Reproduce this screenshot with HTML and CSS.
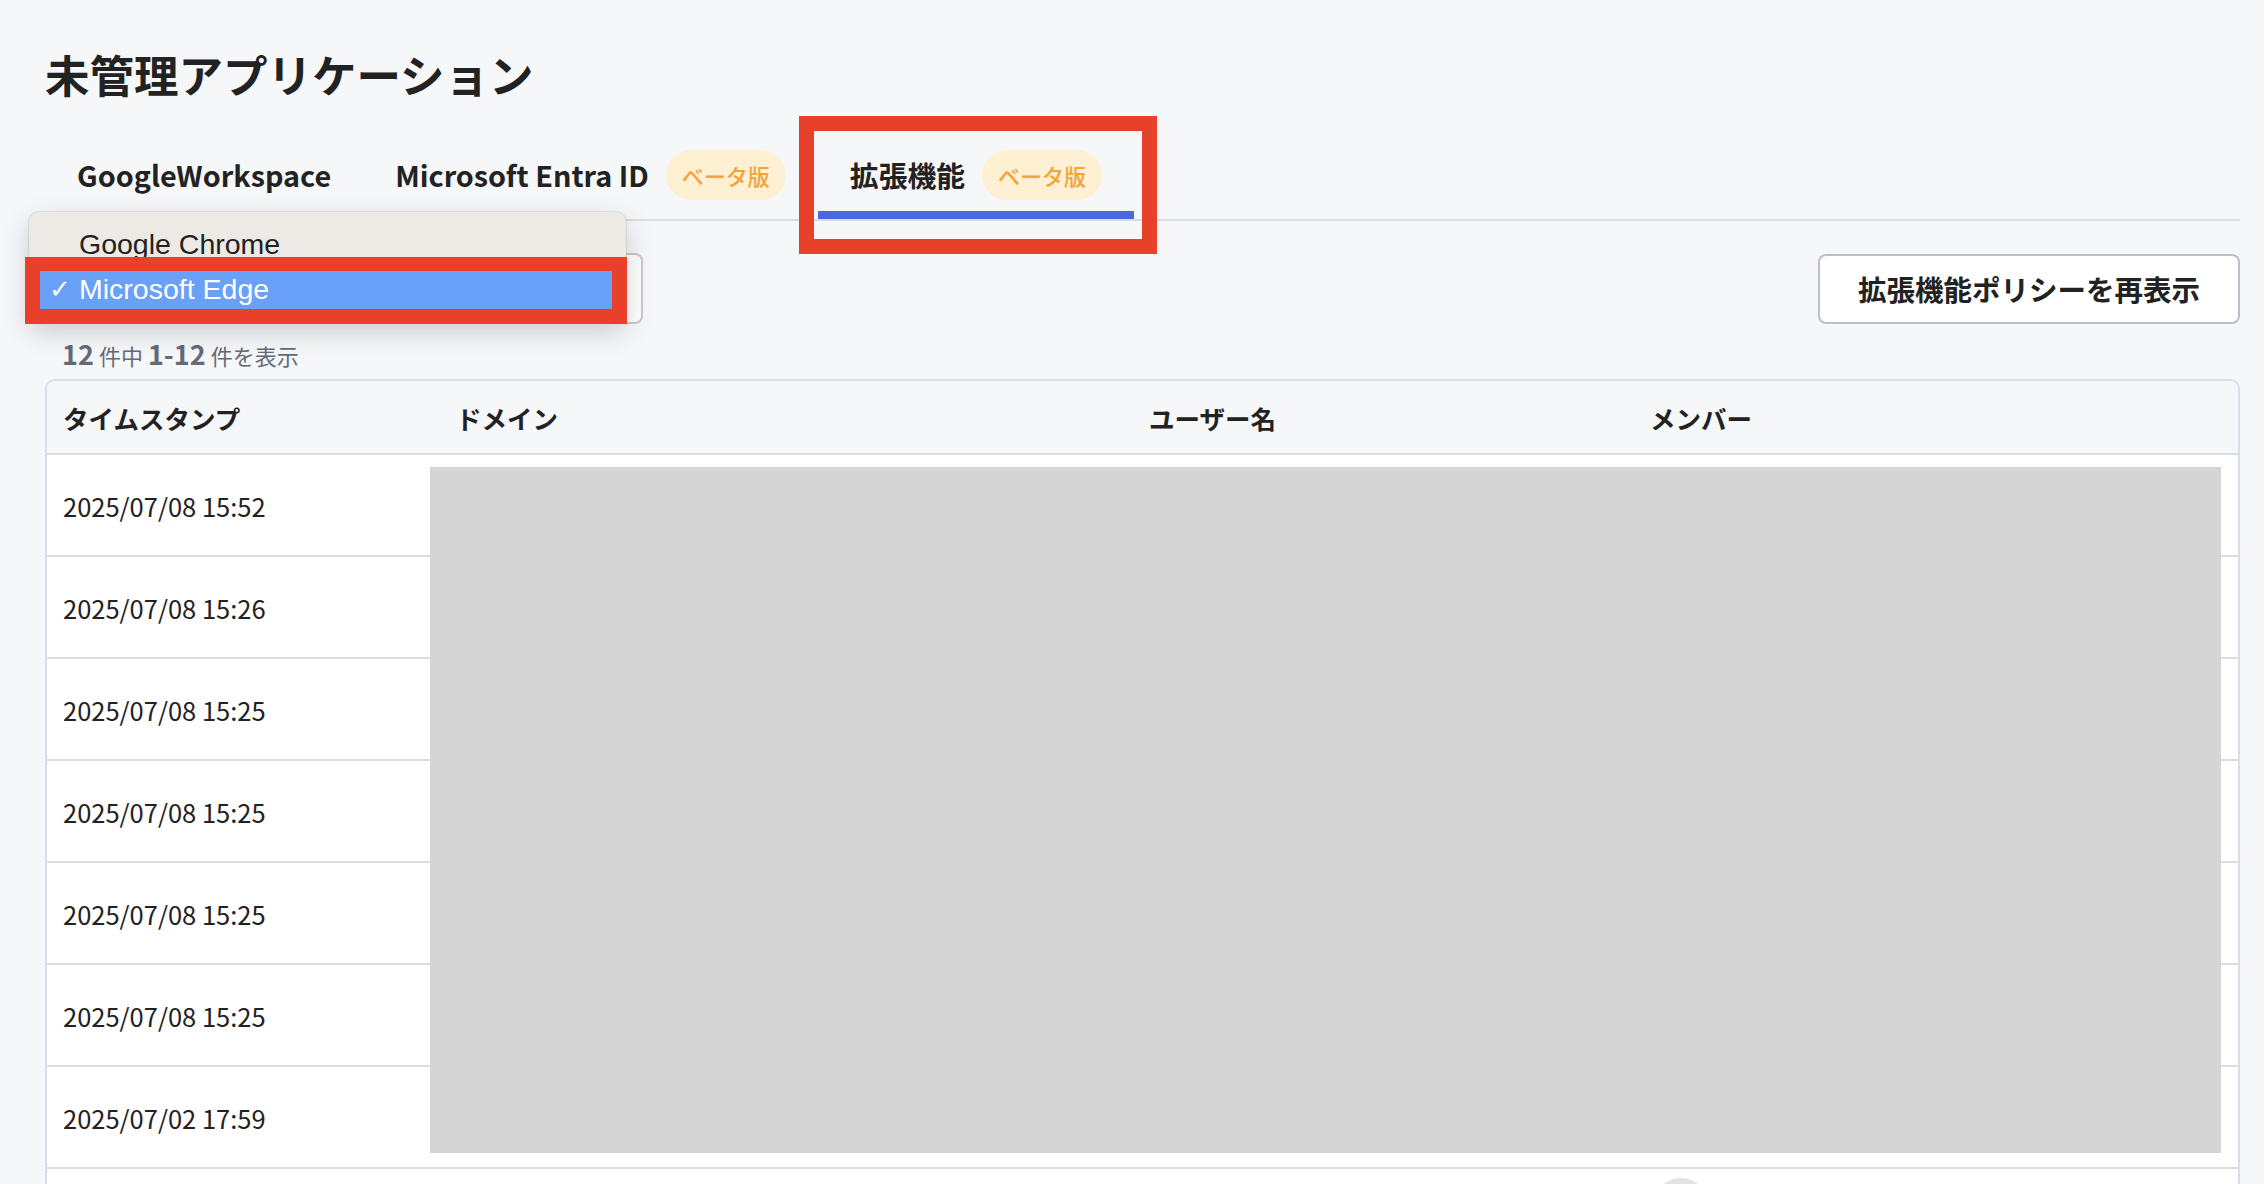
FILE: index.html
```html
<!DOCTYPE html>
<html lang="ja">
<head>
  <meta charset="UTF-8" />
  <title>未管理アプリケーション</title>
  <link rel="stylesheet" href="styles.css">
</head>
<body>

  <div class="page">
    <h1 class="title">未管理アプリケーション</h1>

    <nav class="tabs">
      <div class="tab">GoogleWorkspace</div>
      <div class="tab">Microsoft Entra ID <span class="badge">ベータ版</span></div>
      <div class="tab active">拡張機能 <span class="badge">ベータ版</span>
        <span class="annot annot-tab"></span>
      </div>
    </nav>

    <div class="toolbar">
      <div class="select-wrap">
        <div class="select"></div>
        <ul class="menu">
          <li>Google Chrome</li>
          <li class="selected">Microsoft Edge
            <span class="annot annot-option"></span>
          </li>
        </ul>
      </div>
      <button class="btn">拡張機能ポリシーを再表示</button>
    </div>

    <p class="count"><b>12</b><span>件中</span><b>1-12</b><span>件を表示</span></p>

    <div class="table-wrap">
      <table>
        <colgroup>
          <col class="c-time">
          <col class="c-domain">
          <col class="c-user">
          <col>
        </colgroup>
        <thead>
          <tr>
            <th>タイムスタンプ</th>
            <th>ドメイン</th>
            <th>ユーザー名</th>
            <th>メンバー</th>
          </tr>
        </thead>
        <tbody>
          <tr><td>2025/07/08 15:52</td><td></td><td></td><td></td></tr>
          <tr><td>2025/07/08 15:26</td><td></td><td></td><td></td></tr>
          <tr><td>2025/07/08 15:25</td><td></td><td></td><td></td></tr>
          <tr><td>2025/07/08 15:25</td><td></td><td></td><td></td></tr>
          <tr><td>2025/07/08 15:25</td><td></td><td></td><td></td></tr>
          <tr><td>2025/07/08 15:25</td><td></td><td></td><td></td></tr>
          <tr><td>2025/07/02 17:59</td><td></td><td></td><td></td></tr>
          <tr class="row-more"><td></td><td></td><td></td><td class="members"><span class="avatar"></span></td></tr>
        </tbody>
      </table>
      <div class="redact"></div>
    </div>
  </div>

</body>
</html>
```

FILE: styles.css
```css
body { margin: 0; background: #f6f7f9; color: #222; font-family: "Noto Sans CJK JP", sans-serif; }
.page { padding: 42px 24px 0 45px; }

.title { margin: 0 0 24px; font-size: 44.5px; line-height: 64px; font-weight: 700; }

/* tabs */
.tabs { display: flex; border-bottom: 2px solid #d7dce4; }
.tab { position: relative; display: flex; align-items: center; gap: 17px; padding: 20px 32px 11px; border-bottom: 8px solid transparent; font-size: 28.8px; font-weight: 700; line-height: 50px; }
.tab.active { border-bottom-color: #4a69dc; }
.badge { display: inline-block; height: 50px; padding: 0 16px; border-radius: 25px; background: #fdf0d3; color: #f2a33a; font-size: 22px; font-weight: 500; line-height: 50px; }

/* red annotation frames */
.annot { position: absolute; border: 15px solid #e8402a; pointer-events: none; }
.annot-tab { left: -19px; right: -23px; top: -14px; bottom: -43px; }
.annot-option { left: -4px; right: -1px; top: -10px; bottom: -12px; border-top-width: 14px; }

/* toolbar */
.toolbar { display: flex; justify-content: space-between; align-items: center; margin-top: 32px; }
.select-wrap { position: relative; }
.select { width: 598px; height: 71px; box-sizing: border-box; border: 2px solid #c5cad3; border-radius: 8px; background: #fff; }
.menu { position: absolute; left: -16px; top: -41px; width: 597px; margin: 0; padding: 10px 0; list-style: none; background: #edeae5; border-radius: 10px; box-shadow: 0 10px 28px rgba(0, 0, 0, 0.18), 0 0 0 1px rgba(0, 0, 0, 0.08); font-family: "Liberation Sans", sans-serif; font-size: 28.5px; }
.menu li { position: relative; height: 45px; line-height: 45px; padding-left: 50px; }
.menu li.selected { background: #69a0f8; color: #fff; }
.menu li.selected::before { content: "✓"; position: absolute; left: 20px; font-family: "DejaVu Sans", sans-serif; font-size: 26px; }
.btn { height: 70px; padding: 0 38px; border: 2px solid #b9c0cd; border-radius: 8px; background: #fff; color: #222; font-family: "Noto Sans CJK JP", sans-serif; font-size: 28.5px; font-weight: 700; }

.count { margin: 12px 0 3px 17px; line-height: 36px; color: #646b78; }
.count b { font-size: 27px; }
.count span { margin: 0 5px; font-size: 22px; }

/* table */
.table-wrap { position: relative; background: #fff; border: 2px solid #d9dee6; border-radius: 10px; overflow: hidden; }
table { width: 100%; border-collapse: collapse; table-layout: fixed; }
col.c-time { width: 393px; }
col.c-domain { width: 693px; }
col.c-user { width: 501px; }
th { height: 72px; padding: 0 16px; background: #f6f7f9; border-bottom: 2px solid #d9dee6; text-align: left; font-size: 25.5px; font-weight: 700; }
td { height: 100px; padding: 0 16px; border-bottom: 2px solid #d9dee6; font-size: 25.5px; }
td.members { vertical-align: top; padding-top: 9px; }
.avatar { display: inline-block; width: 56px; height: 56px; margin-left: 3px; border-radius: 50%; background: #e3e3e3; }
.redact { position: absolute; left: 383px; top: 86px; width: 1791px; height: 686px; background: #d5d5d5; }
```
